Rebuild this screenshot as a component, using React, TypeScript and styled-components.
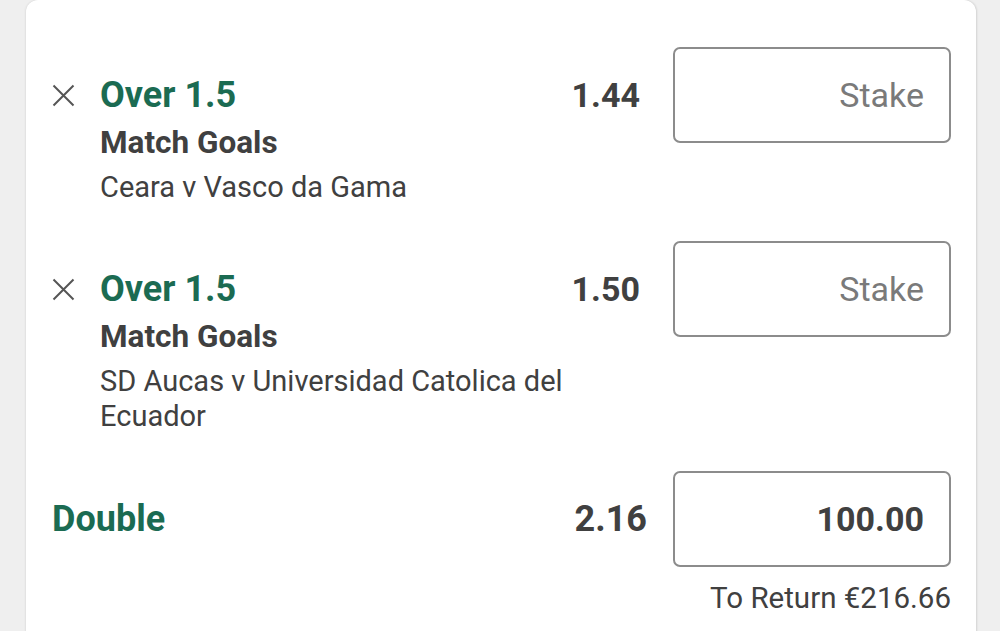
import React from "react";
import styled, { createGlobalStyle } from "styled-components";

const Global = createGlobalStyle`
  html, body { margin: 0; padding: 0; background: #efefef; }
  body { font-family: Roboto, "Noto Sans", Arial, sans-serif; }
  * { box-sizing: border-box; }
`;

const Page = styled.div`
  width: 1000px;
  height: 631px;
  overflow: hidden;
  padding: 0 24px 0 26px;
`;

const Card = styled.div`
  background: #fff;
  border-radius: 12px 12px 0 0;
  box-shadow: 1px 0 2px rgba(0, 0, 0, 0.12), -1px 0 2px rgba(0, 0, 0, 0.06);
  padding: 47px 25px 0 0;
  min-height: 700px;
  display: flex;
  flex-direction: column;
`;

const Selection = styled.div<{ $gap: number }>`
  display: flex;
  align-items: flex-start;
  margin-bottom: ${(p) => p.$gap}px;
`;

const Remove = styled.button`
  width: 74px;
  height: 48px;
  margin-top: 24px;
  padding: 0 0 0 26px;
  border: none;
  background: none;
  display: flex;
  align-items: center;
  flex-shrink: 0;
`;

const Info = styled.div`
  flex: 1;
  padding-top: 24px;
  min-width: 0;
`;

const Title = styled.div`
  color: #1b6b52;
  font-weight: 700;
  font-size: 36px;
  line-height: 48px;
`;

const Market = styled.div`
  color: #404040;
  font-weight: 700;
  font-size: 31.5px;
  line-height: 48px;
`;

const Event = styled.div`
  color: #404040;
  font-size: 29px;
  line-height: 35px;
  max-width: 480px;
  margin-top: 3px;
`;

const Odds = styled.div<{ $right: number; $size: number }>`
  color: #404040;
  font-weight: 700;
  font-size: ${(p) => p.$size}px;
  line-height: 48px;
  margin-right: ${(p) => p.$right}px;
  flex-shrink: 0;
`;

const SelectionOdds = styled(Odds)`
  margin-top: 24px;
`;

const StakeBox = styled.div<{ $filled?: boolean }>`
  width: 278px;
  height: 96px;
  border: 2px solid #8c8c8c;
  border-radius: 7px;
  flex-shrink: 0;
  display: flex;
  align-items: center;
  justify-content: flex-end;
  padding-right: 25px;
  font-size: 34px;
  font-weight: ${(p) => (p.$filled ? 700 : 400)};
  color: ${(p) => (p.$filled ? "#404040" : "#7a7a7a")};
`;

const Multiple = styled.div`
  display: flex;
  align-items: center;
  padding-left: 26px;
`;

const MultipleName = styled.div`
  flex: 1;
  color: #1b6b52;
  font-weight: 700;
  font-size: 36px;
`;

const Returns = styled.div`
  align-self: flex-end;
  color: #404040;
  font-size: 29.5px;
  margin-top: 14px;
`;

const CloseIcon = () => (
  <svg width="23" height="23" viewBox="0 0 23 23">
    <path d="M1.5 1.5 L21.5 21.5 M21.5 1.5 L1.5 21.5" stroke="#555" strokeWidth="2" fill="none" />
  </svg>
);

const bets = [
  { event: "Ceara v Vasco da Gama", odds: "1.44", gap: 36 },
  { event: "SD Aucas v Universidad Catolica del Ecuador", odds: "1.50", gap: 37 },
];

export default function App() {
  return (
    <>
      <Global />
      <Page>
        <Card>
          {bets.map((b) => (
            <Selection key={b.odds} $gap={b.gap}>
              <Remove aria-label="Remove">
                <CloseIcon />
              </Remove>
              <Info>
                <Title>Over 1.5</Title>
                <Market>Match Goals</Market>
                <Event>{b.event}</Event>
              </Info>
              <SelectionOdds $right={33} $size={34}>{b.odds}</SelectionOdds>
              <StakeBox>Stake</StakeBox>
            </Selection>
          ))}
          <Multiple>
            <MultipleName>Double</MultipleName>
            <Odds $right={26} $size={36}>2.16</Odds>
            <StakeBox $filled>100.00</StakeBox>
          </Multiple>
          <Returns>To Return €216.66</Returns>
        </Card>
      </Page>
    </>
  );
}
